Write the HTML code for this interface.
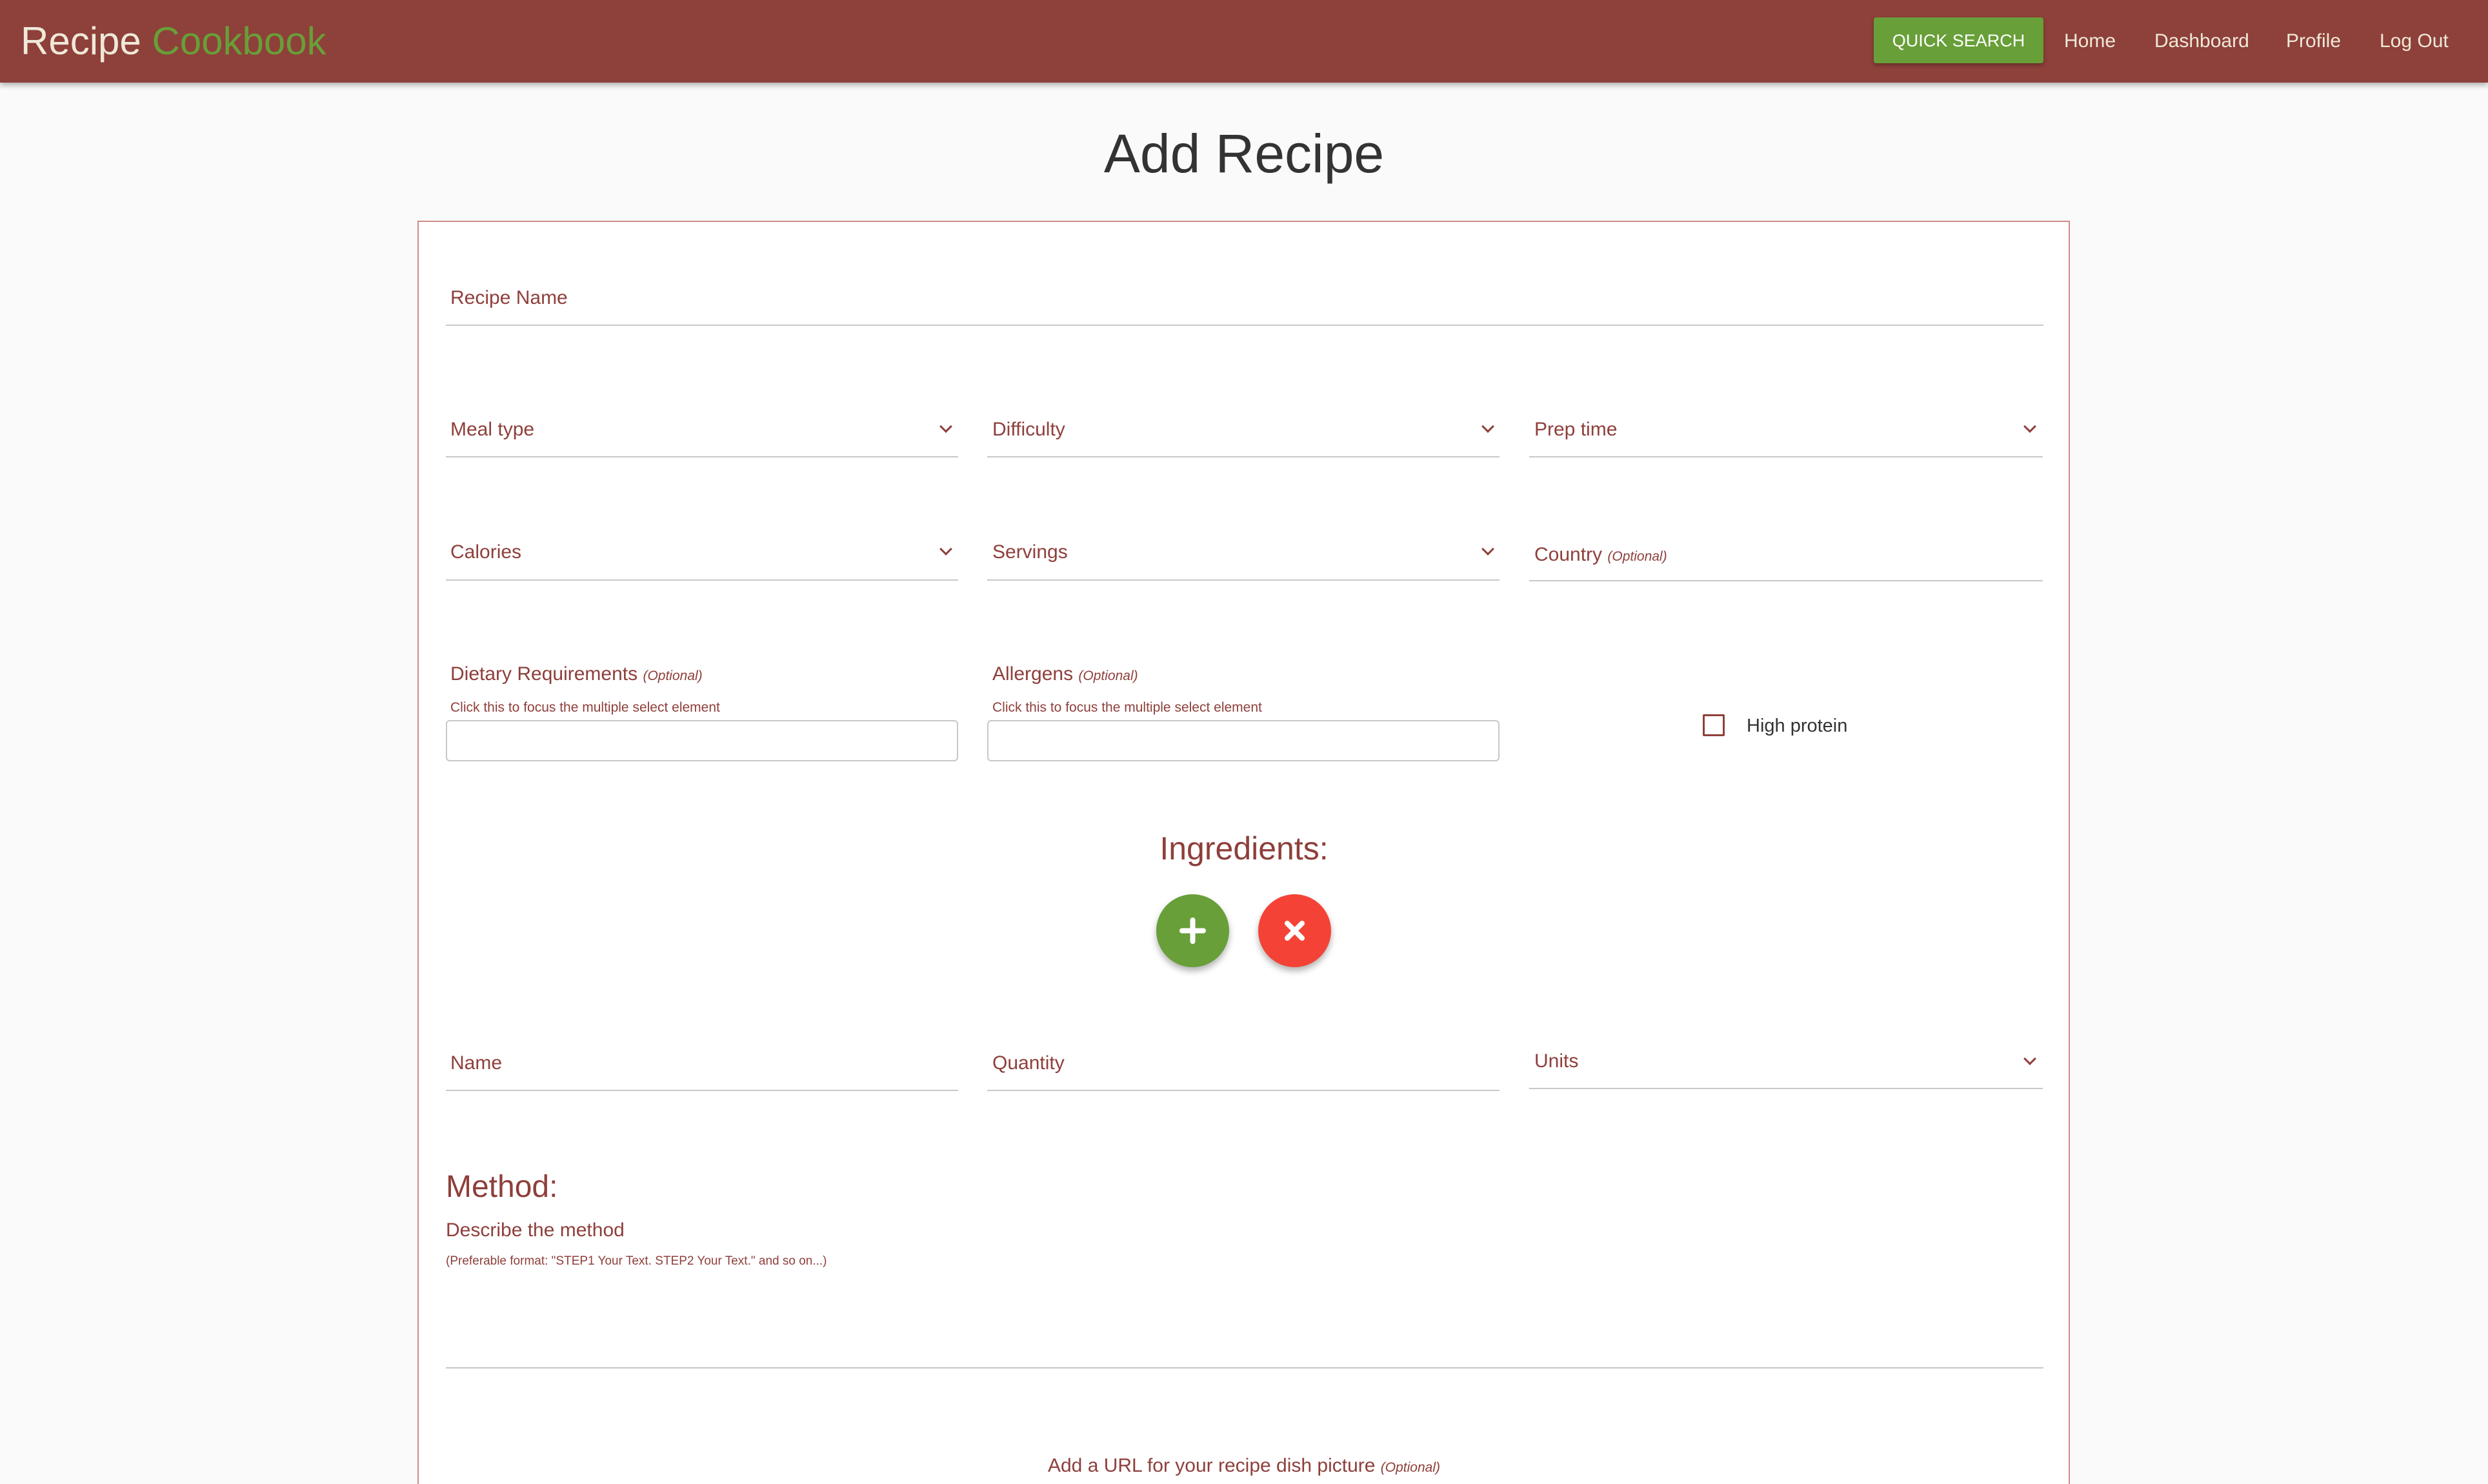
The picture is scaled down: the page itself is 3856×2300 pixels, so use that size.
<!DOCTYPE html>
<html style="overflow:hidden;height:2300px"><head><meta charset="utf-8"><style>
*{margin:0;padding:0;box-sizing:border-box}
body{width:3856px;height:2300px;background:#fafafa;font-family:"Liberation Sans",sans-serif;position:relative;overflow:hidden;color:#8e3f3b}
.a{position:absolute;white-space:nowrap}
nav{position:absolute;left:0;top:0;width:3856px;height:128px;background:#8e403a;box-shadow:0 4px 8px rgba(0,0,0,.3)}
.nl{color:#efe9d8;font-size:30px;top:47px}
.card{position:absolute;left:647px;top:342px;width:2561px;height:1970px;background:#fff;border:2px solid #d08a8a}
.lbl{font-size:30px;color:#8e3f3b}
.opt{font-size:21px;font-style:italic}
.ul{position:absolute;height:2px;background:#c8c8c8}
.chev{position:absolute;width:14px;height:14px;border-right:3px solid #8e3f3b;border-bottom:3px solid #8e3f3b;transform:rotate(45deg)}
.box{position:absolute;height:64px;border:2px solid #c8c8c8;border-radius:6px;background:#fff}
.fab{position:absolute;width:113px;height:113px;border-radius:50%;box-shadow:0 6px 10px rgba(0,0,0,.3)}
</style></head><body>
<nav>
<div class="a" style="left:32px;top:29px;font-size:60px;color:#efe9d8">Recipe <span style="color:#689f38">Cookbook</span></div>
<div class="a" style="left:2904px;top:27px;width:263px;height:71px;background:#689f38;border-radius:4px;box-shadow:0 3px 6px rgba(0,0,0,.3);color:#fff;font-size:27px;text-align:center;line-height:73px">QUICK SEARCH</div>
<div class="a nl" style="left:3199px">Home</div>
<div class="a nl" style="left:3339px">Dashboard</div>
<div class="a nl" style="left:3543px">Profile</div>
<div class="a nl" style="left:3688px">Log Out</div>
</nav>
<div class="a" style="left:0;width:3856px;text-align:center;top:190px;font-size:84px;color:#333">Add Recipe</div>
<div class="card"></div>

<div class="a lbl" style="left:698px;top:445px">Recipe Name</div>
<div class="ul" style="left:691px;top:503px;width:2476px"></div>

<div class="a lbl" style="left:698px;top:649px">Meal type</div>
<div class="a lbl" style="left:1538px;top:649px">Difficulty</div>
<div class="a lbl" style="left:2378px;top:649px">Prep time</div>
<div class="ul" style="left:691px;top:707px;width:794px"></div>
<div class="ul" style="left:1530px;top:707px;width:794px"></div>
<div class="ul" style="left:2370px;top:707px;width:796px"></div>
<div class="chev" style="left:1459px;top:654px"></div>
<div class="chev" style="left:2299px;top:654px"></div>
<div class="chev" style="left:3139px;top:654px"></div>

<div class="a lbl" style="left:698px;top:839px">Calories</div>
<div class="a lbl" style="left:1538px;top:839px">Servings</div>
<div class="a lbl" style="left:2378px;top:843px">Country <span class="opt">(Optional)</span></div>
<div class="ul" style="left:691px;top:898px;width:794px"></div>
<div class="ul" style="left:1530px;top:898px;width:794px"></div>
<div class="ul" style="left:2370px;top:899px;width:796px"></div>
<div class="chev" style="left:1459px;top:844px"></div>
<div class="chev" style="left:2299px;top:844px"></div>

<div class="a lbl" style="left:698px;top:1028px">Dietary Requirements <span class="opt">(Optional)</span></div>
<div class="a lbl" style="left:1538px;top:1028px">Allergens <span class="opt">(Optional)</span></div>
<div class="a" style="left:698px;top:1085px;font-size:21px">Click this to focus the multiple select element</div>
<div class="a" style="left:1538px;top:1085px;font-size:21px">Click this to focus the multiple select element</div>
<div class="box" style="left:691px;top:1116px;width:794px"></div>
<div class="box" style="left:1530px;top:1116px;width:794px"></div>
<div class="a" style="left:2639px;top:1107px;width:34px;height:34px;border:3px solid #8e3f3b;border-radius:2px"></div>
<div class="a" style="left:2707px;top:1109px;font-size:29px;color:#333">High protein</div>

<div class="a" style="left:0;width:3856px;text-align:center;top:1286px;font-size:50px">Ingredients:</div>
<div class="fab" style="left:1792px;top:1386px;background:#689f38"><svg width="113" height="113"><path d="M56.5 40v33M40 56.5h33" stroke="#fff" stroke-width="8" stroke-linecap="round"/></svg></div>
<div class="fab" style="left:1950px;top:1386px;background:#f44336"><svg width="113" height="113"><path d="M45 45l23 23M68 45l-23 23" stroke="#fff" stroke-width="8" stroke-linecap="round"/></svg></div>

<div class="a lbl" style="left:698px;top:1631px">Name</div>
<div class="a lbl" style="left:1538px;top:1631px">Quantity</div>
<div class="a lbl" style="left:2378px;top:1628px">Units</div>
<div class="ul" style="left:691px;top:1689px;width:794px"></div>
<div class="ul" style="left:1530px;top:1689px;width:794px"></div>
<div class="ul" style="left:2370px;top:1686px;width:796px"></div>
<div class="chev" style="left:3139px;top:1634px"></div>

<div class="a" style="left:691px;top:1812px;font-size:48px">Method:</div>
<div class="a lbl" style="left:691px;top:1890px">Describe the method</div>
<div class="a" style="left:691px;top:1944px;font-size:19px">(Preferable format: "STEP1 Your Text. STEP2 Your Text." and so on...)</div>
<div class="ul" style="left:691px;top:2119px;width:2476px"></div>

<div class="a lbl" style="left:0;width:3856px;text-align:center;top:2255px">Add a URL for your recipe dish picture <span class="opt">(Optional)</span></div>
</body></html>
